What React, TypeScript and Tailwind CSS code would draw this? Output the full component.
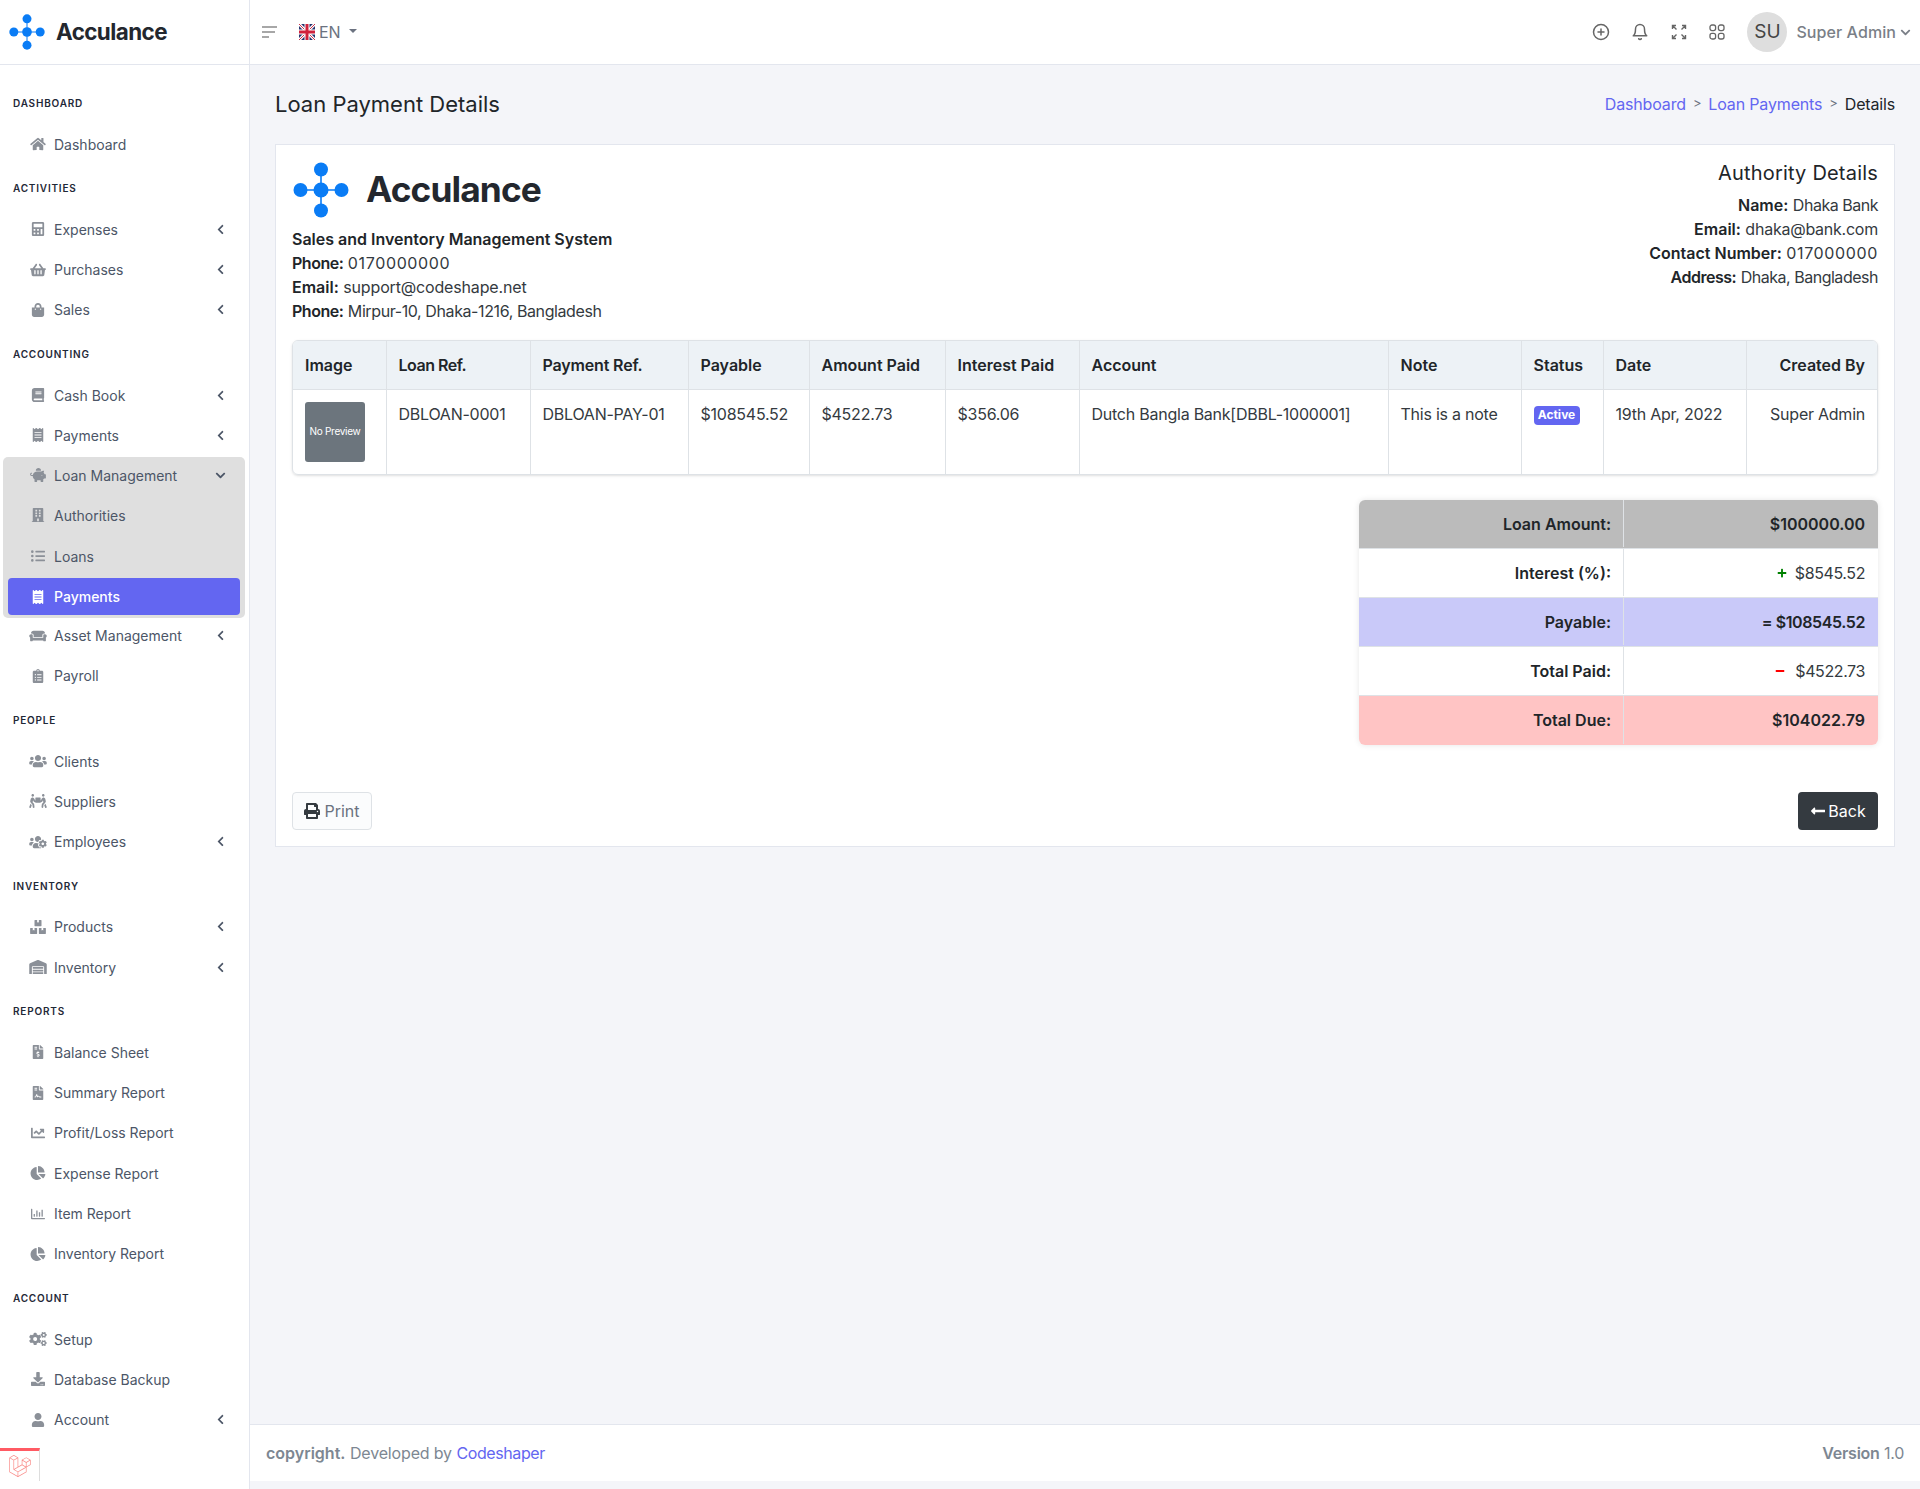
import type { ComponentType, ReactNode } from "react";
import {
  FaBook,
  FaBoxes,
  FaBuilding,
  FaCalculator,
  FaChartLine,
  FaChartPie,
  FaChevronDown,
  FaChevronLeft,
  FaClipboardList,
  FaCogs,
  FaCouch,
  FaDownload,
  FaFileContract,
  FaFileInvoiceDollar,
  FaHome,
  FaLaravel,
  FaListUl,
  FaLongArrowAltLeft,
  FaMinus,
  FaPeopleCarry,
  FaPiggyBank,
  FaPlus,
  FaPrint,
  FaReceipt,
  FaRegChartBar,
  FaShoppingBag,
  FaShoppingBasket,
  FaUser,
  FaUsers,
  FaUsersCog,
  FaWarehouse,
} from "react-icons/fa";
import { FiBell, FiPlusCircle } from "react-icons/fi";

type Icon = ComponentType<{ className?: string }>;
type Item = { label: string; icon: Icon; arrow?: boolean };

// Logo mark: four dots round a centre dot
function LogoMark({ className }: { className: string }) {
  return (
    <svg viewBox="-28 -28 56 56" className={className} fill="#0a7cf5">
      <path d="M0 -20V20M-20 0H20" stroke="#0a7cf5" strokeWidth="1.6" />
      <circle cx="0" cy="-20.5" r="7" />
      <circle cx="0" cy="20.5" r="7" />
      <circle cx="-20.5" cy="0" r="7" />
      <circle cx="20.5" cy="0" r="7" />
      <circle cx="0" cy="0" r="7.5" />
    </svg>
  );
}

function UkFlag() {
  return (
    <svg viewBox="0 0 16 16" className="h-4 w-4">
      <rect width="16" height="16" fill="#26346f" />
      <path d="M0 0L16 16M16 0L0 16" stroke="#fff" strokeWidth="3" />
      <path d="M0 0L16 16M16 0L0 16" stroke="#d0314a" strokeWidth="1" />
      <path d="M8 0V16M0 8H16" stroke="#fff" strokeWidth="5" />
      <path d="M8 0V16M0 8H16" stroke="#d0213c" strokeWidth="3" />
    </svg>
  );
}

function NavRow({ item, className }: { item: Item; className: string }) {
  const Icon = item.icon;
  return (
    <a className={`flex items-center text-[14px] text-[#4c5667] ${className}`}>
      <span className="flex w-[20px] shrink-0 justify-center text-[#8b9098]">
        <Icon className="h-[14px] w-[18px] shrink-0" />
      </span>
      <span className="ml-[6px] flex-1">{item.label}</span>
      {item.arrow && <FaChevronLeft className="h-[11px] w-[11px] text-[#4c5667]" />}
    </a>
  );
}

function NavSection({ title, items }: { title: string; items: Item[] }) {
  return (
    <>
      <div className="flex h-[44.9px] items-center pt-[4px] pl-[13px] text-[10px] font-semibold tracking-[0.08em] text-[#1f2937]">
        {title}
      </div>
      {items.map((item) => (
        <NavRow key={item.label} item={item} className="h-[40.3px] pr-[23px] pl-[28px]" />
      ))}
    </>
  );
}

function Sidebar() {
  return (
    <aside className="w-[250px] shrink-0 border-r border-[#e3e6ee] bg-white">
      <div className="flex h-[65px] items-center border-b border-[#e3e6ee] pl-[9px]">
        <LogoMark className="h-[36px] w-[36px]" />
        <span className="ml-[11px] text-[22.4px] font-bold tracking-[-0.025em] text-[#23272e]">Acculance</span>
      </div>
      <nav className="pt-[14px]">
        <NavSection title="DASHBOARD" items={[{ label: "Dashboard", icon: FaHome }]} />
        <NavSection
          title="ACTIVITIES"
          items={[
            { label: "Expenses", icon: FaCalculator, arrow: true },
            { label: "Purchases", icon: FaShoppingBasket, arrow: true },
            { label: "Sales", icon: FaShoppingBag, arrow: true },
          ]}
        />
        <NavSection
          title="ACCOUNTING"
          items={[
            { label: "Cash Book", icon: FaBook, arrow: true },
            { label: "Payments", icon: FaReceipt, arrow: true },
          ]}
        />
        {/* Open submenu */}
        <div className="mt-[2px] mr-[4px] mb-[-3px] ml-[3px] h-[161px] rounded-[5px] bg-[#dfdfdf]">
          <a className="flex h-[36px] items-center pr-[19px] pl-[25px] text-[14px] text-[#4c5667]">
            <span className="flex w-[20px] shrink-0 justify-center text-[#8b9098]">
              <FaPiggyBank className="h-[14px] w-[18px] shrink-0" />
            </span>
            <span className="ml-[6px] flex-1">Loan Management</span>
            <FaChevronDown className="h-[11px] w-[11px]" />
          </a>
          <NavRow item={{ label: "Authorities", icon: FaBuilding }} className="h-[44px] pl-[25px]" />
          <NavRow item={{ label: "Loans", icon: FaListUl }} className="h-[38px] pl-[25px]" />
          <a className="mx-[5px] mt-[3px] flex h-[37px] items-center rounded-[4px] bg-[#6366f1] pl-[20px] text-[14px] font-medium text-white">
            <span className="flex w-[20px] justify-center">
              <FaReceipt className="h-[14px] w-[18px] shrink-0" />
            </span>
            <span className="ml-[6px]">Payments</span>
          </a>
        </div>
        <NavRow item={{ label: "Asset Management", icon: FaCouch, arrow: true }} className="h-[40.3px] pr-[23px] pl-[28px]" />
        <NavRow item={{ label: "Payroll", icon: FaClipboardList }} className="h-[40.3px] pr-[23px] pl-[28px]" />
        <NavSection
          title="PEOPLE"
          items={[
            { label: "Clients", icon: FaUsers },
            { label: "Suppliers", icon: FaPeopleCarry },
            { label: "Employees", icon: FaUsersCog, arrow: true },
          ]}
        />
        <NavSection
          title="INVENTORY"
          items={[
            { label: "Products", icon: FaBoxes, arrow: true },
            { label: "Inventory", icon: FaWarehouse, arrow: true },
          ]}
        />
        <NavSection
          title="REPORTS"
          items={[
            { label: "Balance Sheet", icon: FaFileInvoiceDollar },
            { label: "Summary Report", icon: FaFileContract },
            { label: "Profit/Loss Report", icon: FaChartLine },
            { label: "Expense Report", icon: FaChartPie },
            { label: "Item Report", icon: FaRegChartBar },
            { label: "Inventory Report", icon: FaChartPie },
          ]}
        />
        <NavSection
          title="ACCOUNT"
          items={[
            { label: "Setup", icon: FaCogs },
            { label: "Database Backup", icon: FaDownload },
            { label: "Account", icon: FaUser, arrow: true },
          ]}
        />
      </nav>
    </aside>
  );
}

function Topbar() {
  return (
    <header className="flex h-[65px] shrink-0 items-center border-b border-[#e3e6ee] bg-white pr-[9px]">
      <svg viewBox="0 0 15 12" className="ml-[12px] h-[12px] w-[15px]" stroke="#8a8a8a" strokeWidth="1.5">
        <path d="M0 1H15M0 6H13M0 11H7" />
      </svg>
      <div className="ml-[22px] flex items-center">
        <UkFlag />
        <span className="ml-[4px] text-[16px] text-[#6b7280]">EN</span>
        <span className="mb-[3px] ml-[8px] h-0 w-0 border-x-[4.5px] border-t-[4.5px] border-x-transparent border-t-[#6b7280]" />
      </div>
      <div className="ml-auto flex items-center text-[#666]">
        <FiPlusCircle className="h-[18px] w-[18px]" />
        <FiBell className="ml-[21px] h-[18px] w-[18px]" />
        <svg viewBox="0 0 16 16" className="ml-[22px] h-[16px] w-[16px]" fill="none" stroke="currentColor" strokeWidth="1.4">
          <path d="M1.5 5V1.5H5M1.5 1.5L5.5 5.5M11 1.5H14.5V5M14.5 1.5L10.5 5.5M1.5 11V14.5H5M1.5 14.5L5.5 10.5M14.5 11V14.5H11M14.5 14.5L10.5 10.5" />
        </svg>
        <svg viewBox="0 0 16 16" className="ml-[22px] h-[16px] w-[16px]" fill="none" stroke="currentColor" strokeWidth="1.3">
          <rect x="1" y="1" width="5.6" height="5.6" rx="2" />
          <rect x="9.4" y="1" width="5.6" height="5.6" rx="2" />
          <rect x="1" y="9.4" width="5.6" height="5.6" rx="2" />
          <rect x="9.4" y="9.4" width="5.6" height="5.6" rx="2" />
        </svg>
        <span className="ml-[22px] flex h-[40px] w-[40px] items-center justify-center rounded-full bg-[#dedede] text-[19px] text-[#444]">
          SU
        </span>
        <span className="ml-[9px] text-[16px] font-medium tracking-[0.005em] text-[#7a7f87]">Super Admin</span>
        <FaChevronDown className="ml-[4px] h-[11px] w-[11px] text-[#7a7f87]" />
      </div>
    </header>
  );
}

const columns = [
  { label: "Image", width: "w-[93px]" },
  { label: "Loan Ref.", width: "w-[144px] tracking-[-0.03em]" },
  { label: "Payment Ref.", width: "w-[158px] tracking-[-0.01em]" },
  { label: "Payable", width: "w-[121px]" },
  { label: "Amount Paid", width: "w-[136px]" },
  { label: "Interest Paid", width: "w-[134px]" },
  { label: "Account", width: "w-[309px]" },
  { label: "Note", width: "w-[133px]" },
  { label: "Status", width: "w-[82px]" },
  { label: "Date", width: "w-[143px]" },
  { label: "Created By", width: "w-[133px] text-right !pr-[14px]" },
];

function Td({ children, className = "" }: { children: ReactNode; className?: string }) {
  return (
    <td className={`border-l border-[#dee2e6] px-[12px] pt-[12px] align-top tracking-[-0.015em] first:border-l-0 ${className}`}>
      {children}
    </td>
  );
}

function PaymentTable() {
  return (
    <div className="mt-[17px] overflow-hidden rounded-[6px] border border-[#dee2e6] shadow-sm">
      <table className="w-full table-fixed border-collapse text-left text-[16px] text-[#343a40]">
        <thead>
          <tr className="h-[48px] border-b border-[#dee2e6] bg-[#edf2f6]">
            {columns.map((col) => (
              <th
                key={col.label}
                className={`border-l border-[#dee2e6] px-[12px] font-semibold text-[#212529] first:border-l-0 ${col.width}`}
              >
                {col.label}
              </th>
            ))}
          </tr>
        </thead>
        <tbody>
          <tr className="h-[85px]">
            <Td>
              <div className="flex h-[60px] w-[60px] items-center justify-center rounded-[3px] bg-[#6c757d] text-[10px] tracking-[-0.03em] text-white">
                No Preview
              </div>
            </Td>
            <Td>DBLOAN-0001</Td>
            <Td className="tracking-[-0.03em]">DBLOAN-PAY-01</Td>
            <Td>$108545.52</Td>
            <Td>$4522.73</Td>
            <Td>$356.06</Td>
            <Td className="tracking-[-0.02em]">Dutch Bangla Bank[DBBL-1000001]</Td>
            <Td>This is a note</Td>
            <Td>
              <span className="mt-[4px] flex h-[19px] w-[46px] items-center justify-center rounded-[4px] bg-[#6366f1] text-[12px] font-bold tracking-normal text-white">
                Active
              </span>
            </Td>
            <Td>19th Apr, 2022</Td>
            <Td className="!pr-[14px] text-right">Super Admin</Td>
          </tr>
        </tbody>
      </table>
    </div>
  );
}

function SummaryRow({
  label,
  bg,
  bold,
  children,
}: {
  label: string;
  bg: string;
  bold?: boolean;
  children: ReactNode;
}) {
  return (
    <div className={`flex h-[49px] border-b border-[#dee2e6] pb-[1px] last:border-b-0 ${bg}`}>
      <div className="flex w-[265px] items-center justify-end border-r border-[#dee2e6] pr-[12px] font-semibold text-[#212529]">
        {label}
      </div>
      <div
        className={`flex flex-1 items-center justify-end pr-[13px] ${bold ? "font-semibold text-[#212529]" : "tracking-[-0.025em] text-[#343a40]"}`}
      >
        {children}
      </div>
    </div>
  );
}

function Summary() {
  return (
    <div className="mt-[25px] flex justify-end">
      <div className="w-[519px] overflow-hidden rounded-[6px] text-[16px] shadow-[0_0_6px_rgba(0,0,0,0.1)]">
        <SummaryRow label="Loan Amount:" bg="bg-[#bbbbbb]" bold>
          $100000.00
        </SummaryRow>
        <SummaryRow label="Interest (%):" bg="bg-white">
          <FaPlus className="mr-[8px] h-[10px] w-[10px] text-[#008000]" />
          $8545.52
        </SummaryRow>
        <SummaryRow label="Payable:" bg="bg-[#c9c9f9]" bold>
          <span className="tracking-[-0.025em]">= $108545.52</span>
        </SummaryRow>
        <SummaryRow label="Total Paid:" bg="bg-white">
          <FaMinus className="mr-[10px] h-[10px] w-[10px] text-[#ff0000]" />
          $4522.73
        </SummaryRow>
        <SummaryRow label="Total Due:" bg="bg-[#ffc4c4]" bold>
          $104022.79
        </SummaryRow>
      </div>
    </div>
  );
}

function Details() {
  return (
    <section className="border border-[#e3e6ee] bg-white p-[16px]">
      <div className="flex justify-between text-[16px] leading-[24px] text-[#343a40]">
        <div>
          <div className="mb-[8px] flex h-[58px] items-center">
            <LogoMark className="ml-[1px] h-[56px] w-[56px]" />
            <span className="ml-[17px] text-[35.3px] font-bold tracking-[-0.025em] text-[#23272e]">Acculance</span>
          </div>
          <div className="font-semibold text-[#212529]">Sales and Inventory Management System</div>
          <div>
            <b className="font-semibold tracking-[-0.03em] text-[#212529]">Phone:</b>{" "}
            <span className="tracking-[0.04em]">0170000000</span>
          </div>
          <div>
            <b className="font-semibold text-[#212529]">Email:</b>{" "}
            <span className="tracking-[-0.01em]">support@codeshape.net</span>
          </div>
          <div>
            <b className="font-semibold tracking-[-0.03em] text-[#212529]">Phone:</b>{" "}
            <span className="tracking-[-0.025em]">Mirpur-10, Dhaka-1216, Bangladesh</span>
          </div>
        </div>
        <div className="text-right">
          <h3 className="mb-[8px] text-[20px] tracking-[0.01em] text-[#212529]">Authority Details</h3>
          <div>
            <b className="font-semibold text-[#212529]">Name:</b>{" "}
            <span className="tracking-[-0.03em]">Dhaka Bank</span>
          </div>
          <div>
            <b className="font-semibold text-[#212529]">Email:</b>{" "}
            <span className="tracking-[-0.015em]">dhaka@bank.com</span>
          </div>
          <div>
            <b className="font-semibold text-[#212529]">Contact Number:</b>{" "}
            <span className="tracking-[0.04em]">017000000</span>
          </div>
          <div>
            <b className="font-semibold tracking-[-0.03em] text-[#212529]">Address:</b>{" "}
            <span className="tracking-[-0.03em]">Dhaka, Bangladesh</span>
          </div>
        </div>
      </div>
      <PaymentTable />
      <Summary />
      <div className="mt-[47px] flex justify-between text-[16px]">
        <button className="flex h-[38px] w-[80px] items-center justify-center rounded-[4px] border border-[#dee2e6] bg-[#fbfcfd] pb-[1px] text-[#6b7280]">
          <FaPrint className="mr-[4px] h-[16px] w-[16px] text-[#343a40]" />
          Print
        </button>
        <button className="flex h-[38px] w-[80px] items-center justify-center rounded-[4px] bg-[#343a40] pb-[1px] text-white">
          <FaLongArrowAltLeft className="mr-[2px] h-[16px] w-[16px]" />
          Back
        </button>
      </div>
    </section>
  );
}

export default function App() {
  return (
    <div className="relative flex h-[1489px] bg-[#f4f5f9] font-['Inter',sans-serif]">
      <Sidebar />
      <div className="flex min-w-0 flex-1 flex-col">
        <Topbar />
        <main className="flex-1 px-[25px]">
          <div className="flex h-[79px] items-center justify-between text-[16px]">
            <h1 className="text-[22px] font-normal text-[#212529]">Loan Payment Details</h1>
            <div className="flex items-center pb-[2px] tracking-[-0.01em] text-[#6366f1]">
              <a>Dashboard</a>
              <span className="mx-[7px] text-[13px] text-[#6b7280]">&gt;</span>
              <a>Loan Payments</a>
              <span className="mx-[7px] text-[13px] text-[#6b7280]">&gt;</span>
              <span className="text-[#212529]">Details</span>
            </div>
          </div>
          <Details />
        </main>
        <footer className="mb-[8px] flex h-[57px] shrink-0 items-center justify-between border-t border-[#e3e6ee] bg-white pr-[16px] pl-[16px] text-[16px] text-[#7d8792]">
          <div>
            <b className="font-semibold">copyright.</b>{" "}
            <span className="tracking-[-0.01em]">Developed by</span>{" "}
            <a className="tracking-[-0.025em] text-[#6366f1]">Codeshaper</a>
          </div>
          <div className="tracking-[-0.015em]">
            <b className="font-semibold">Version</b> 1.0
          </div>
        </footer>
      </div>
      {/* Debug widget pinned over the sidebar corner */}
      <div className="absolute top-[1448px] left-0 flex h-[33px] w-[40px] items-center justify-center border-t-[3px] border-r border-t-[#ff5a63] border-r-[#ddd] bg-white">
        <FaLaravel className="h-[22px] w-[22px] text-[#f98b88]" />
      </div>
    </div>
  );
}
